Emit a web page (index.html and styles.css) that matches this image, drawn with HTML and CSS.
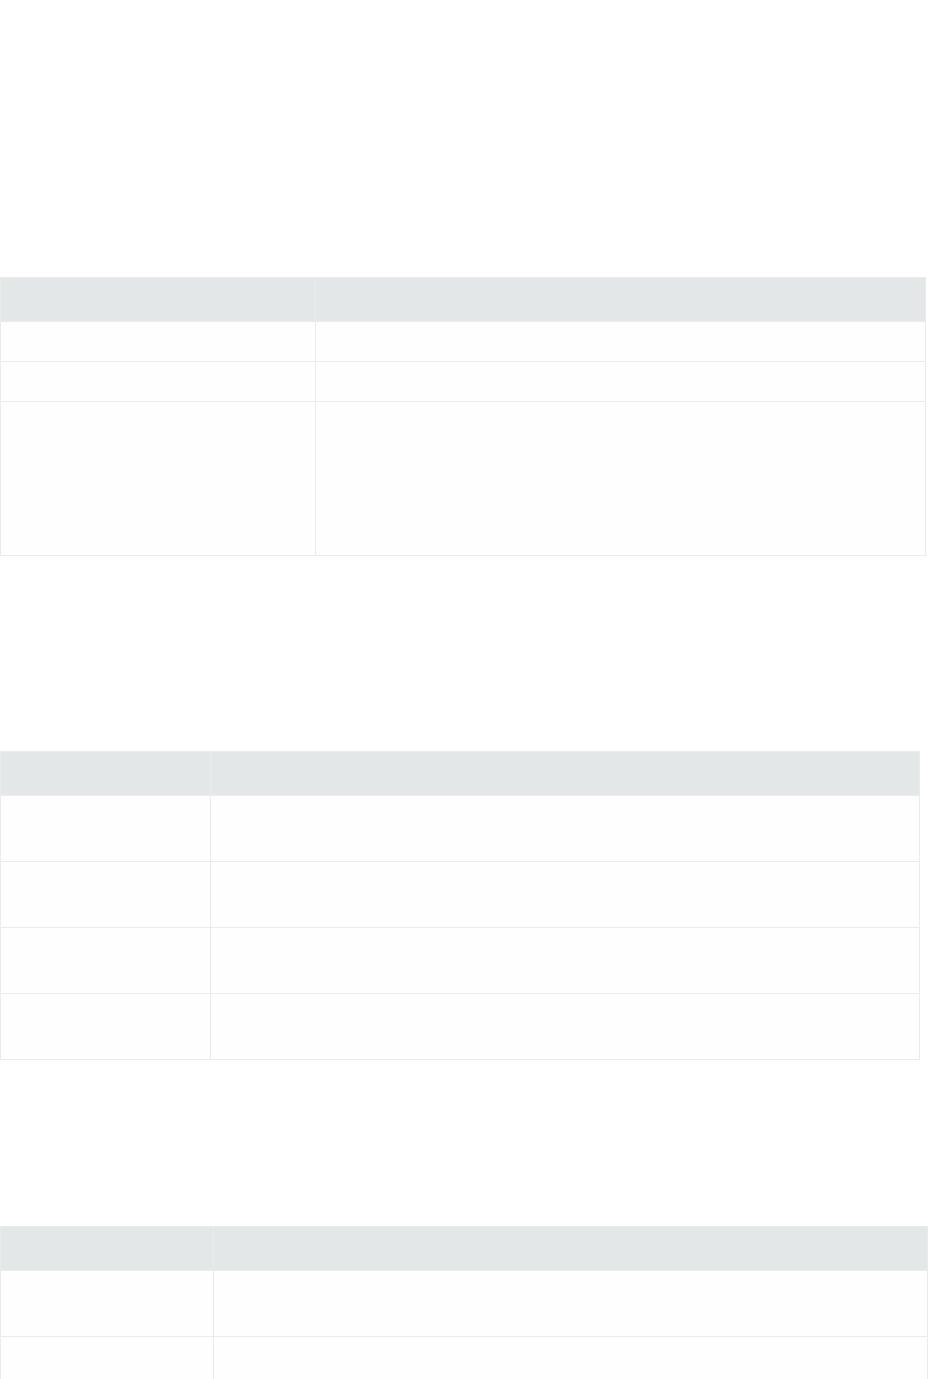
FILE: index.html
```html
<!DOCTYPE html>
<html>
<head>
<meta charset="utf-8">
<link rel="stylesheet" href="styles.css">
</head>
<body>
<main class="page">
  <table class="grid grid-a">
    <colgroup><col class="c1"><col></colgroup>
    <thead><tr><th></th><th></th></tr></thead>
    <tbody>
      <tr class="r-short"><td></td><td></td></tr>
      <tr class="r-short"><td></td><td></td></tr>
      <tr class="r-tall"><td></td><td></td></tr>
    </tbody>
  </table>

  <table class="grid grid-b">
    <colgroup><col class="c1"><col></colgroup>
    <thead><tr><th></th><th></th></tr></thead>
    <tbody>
      <tr class="r-mid"><td></td><td></td></tr>
      <tr class="r-mid"><td></td><td></td></tr>
      <tr class="r-mid"><td></td><td></td></tr>
      <tr class="r-mid"><td></td><td></td></tr>
    </tbody>
  </table>

  <table class="grid grid-c">
    <colgroup><col class="c1"><col></colgroup>
    <thead><tr><th></th><th></th></tr></thead>
    <tbody>
      <tr class="r-mid"><td></td><td></td></tr>
      <tr class="r-mid"><td></td><td></td></tr>
    </tbody>
  </table>
</main>
</body>
</html>
```

FILE: styles.css
```css
html, body {
  margin: 0;
  padding: 0;
  background: #ffffff;
  font-family: "Open Sans", "Liberation Sans", sans-serif;
  font-size: 14px;
  color: #333;
}

.page {
  display: flex;
  flex-direction: column;
  align-items: flex-start;
  padding-top: 277px;
}

.grid {
  border-collapse: collapse;
  table-layout: fixed;
  border: 1px solid #ebebeb;
}

.grid th,
.grid td {
  border: 1px solid #ebebeb;
  padding: 0;
}

.grid th {
  background: #e4e7e7;
  height: 43px;
}

.grid td {
  background: #fefefe;
}

.r-short td { height: 39px; }
.r-tall td { height: 153px; }
.r-mid td { height: 65px; }

.grid-a { width: 926px; }
.grid-a .c1 { width: 315px; }

.grid-b { width: 920px; margin-top: 195px; }
.grid-b .c1 { width: 210px; }

.grid-c { width: 928px; margin-top: 166px; }
.grid-c .c1 { width: 213px; }
```
